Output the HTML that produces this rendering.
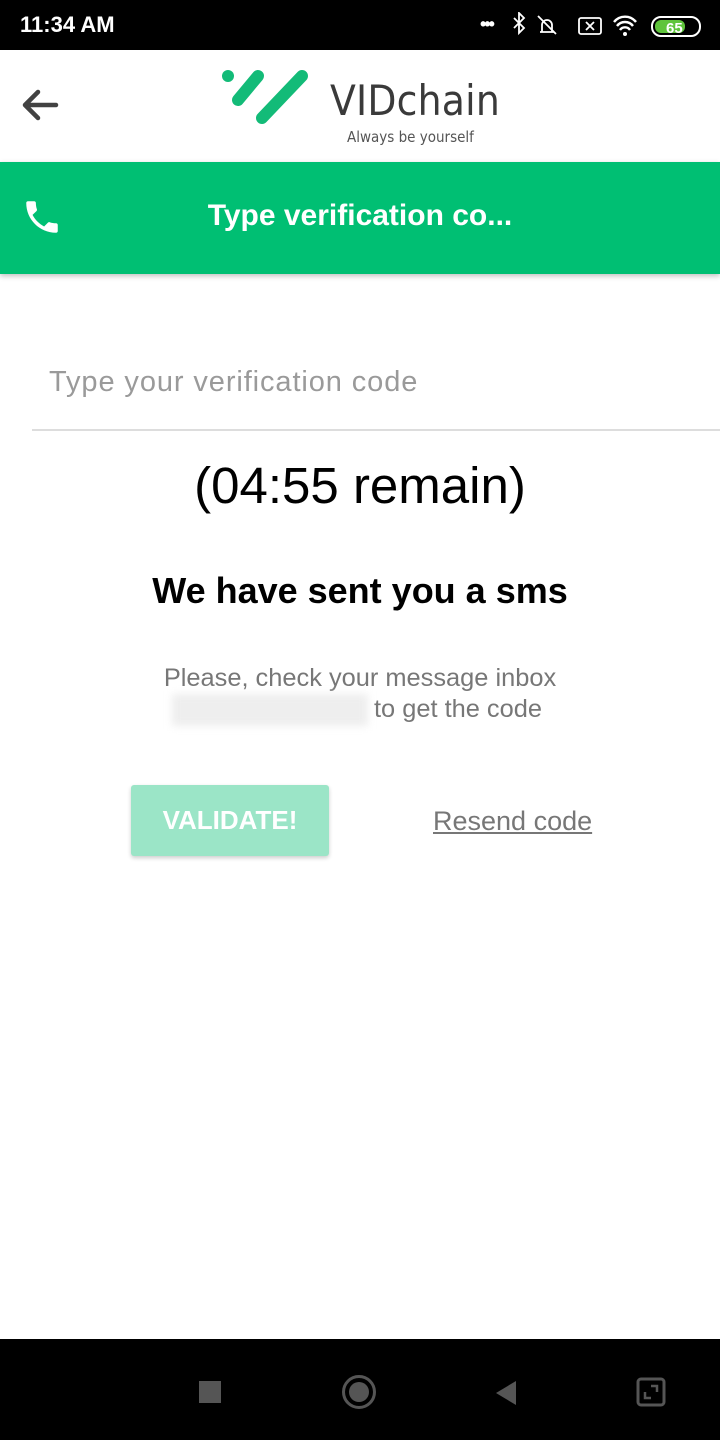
<!DOCTYPE html>
<html><head><meta charset="utf-8"><style>
*{margin:0;padding:0;box-sizing:border-box}
body{width:720px;height:1440px;position:relative;background:#fff;font-family:"Liberation Sans",Roboto,sans-serif;overflow:hidden}
.abs{position:absolute}
</style></head><body>
<div class="abs" style="left:0;top:0;width:720px;height:50px;background:#000"></div>
<div class="abs" style="left:20px;top:12px;color:#fff;font-size:22px;font-weight:bold">11:34 AM</div>
<div class="abs" style="left:480px;top:14px;color:#fff;font-size:18px;font-weight:bold;letter-spacing:-2px">•••</div>
<svg class="abs" style="left:508px;top:12px" width="200" height="28" viewBox="0 0 200 28">
<path d="M6 6l10 10-5 5V1l5 5-10 10" stroke="#fff" stroke-width="1.8" fill="none"/>
<path d="M32 20h14M34 20v-7a5 5 0 0 1 10 0v7M30 4l18 18" stroke="#fff" stroke-width="1.8" fill="none"/>
<rect x="71" y="6" width="22" height="16" rx="2" stroke="#fff" stroke-width="1.8" fill="none"/>
<path d="M78 10l8 8M86 10l-8 8" stroke="#fff" stroke-width="1.8"/>
<path d="M106 10a14 14 0 0 1 22 0M109 14a10 10 0 0 1 16 0M112 18a6 6 0 0 1 10 0" stroke="#fff" stroke-width="2.4" fill="none"/><circle cx="117" cy="22" r="2" fill="#fff"/>
<rect x="144" y="5" width="48" height="19" rx="9" stroke="#fff" stroke-width="2" fill="none"/>
<rect x="147" y="8" width="30" height="13" rx="6" fill="#5fc43b"/>
<text x="158" y="21" font-size="15" font-weight="bold" fill="#fff" font-family="Liberation Sans">65</text>
</svg>
<svg class="abs" style="left:20px;top:86px" width="40" height="40" viewBox="0 0 40 40"><path d="M36 19H6M18 6L5 19l13 13" stroke="#424242" stroke-width="4.5" fill="none" stroke-linecap="round" stroke-linejoin="round"/></svg>
<svg class="abs" style="left:218px;top:66px" width="94" height="62" viewBox="0 0 94 62">
<circle cx="10" cy="10" r="6" fill="#13bb78"/>
<path d="M20 34L40 10M44 52L84 10" stroke="#13bb78" stroke-width="12" stroke-linecap="round"/></svg>
<div class="abs" style="left:330px;top:76px;font-size:42px;color:#3a3a3a;font-family:'DejaVu Sans Condensed','Liberation Sans',sans-serif;font-weight:300;letter-spacing:0.2px">VIDchain</div>
<div class="abs" style="left:347px;top:128px;font-size:15px;color:#555;font-family:'DejaVu Sans Condensed',sans-serif">Always be yourself</div>
<div class="abs" style="left:0;top:162px;width:720px;height:112px;background:#00bf73;box-shadow:0 2px 5px rgba(0,0,0,.25)"></div>
<svg class="abs" style="left:21px;top:196px" width="42" height="42" viewBox="0 0 24 24"><path d="M6.6 10.8c1.4 2.8 3.8 5.1 6.6 6.6l2.2-2.2c.3-.3.7-.4 1-.2 1.1.4 2.3.6 3.6.6.6 0 1 .4 1 1V20c0 .6-.4 1-1 1C10.6 21 3 13.4 3 4c0-.6.4-1 1-1h3.5c.6 0 1 .4 1 1 0 1.3.2 2.5.6 3.6.1.3 0 .7-.2 1L6.6 10.8z" fill="#fff"/></svg>
<div class="abs" style="left:0;top:199px;width:720px;text-align:center;color:#fff;font-size:30px;font-weight:bold">Type verification co...</div>
<div class="abs" style="left:49px;top:366px;font-size:29px;color:#9a9a9a;letter-spacing:0.9px">Type your verification code</div>
<div class="abs" style="left:32px;top:429px;width:688px;height:2px;background:#ddd"></div>
<div class="abs" style="left:0;top:456px;width:720px;text-align:center;font-size:51px;color:#000">(04:55 remain)</div>
<div class="abs" style="left:0;top:570px;width:720px;text-align:center;font-size:36px;font-weight:bold;color:#000">We have sent you a sms</div>
<div class="abs" style="left:0;top:664px;width:720px;text-align:center;font-size:25.4px;color:#777">Please, check your message inbox</div>
<div class="abs" style="left:172px;top:694px;width:196px;height:32px;background:#eee;filter:blur(4px)"></div>
<div class="abs" style="left:374px;top:695px;font-size:25.4px;color:#777">to get the code</div>
<div class="abs" style="left:131px;top:785px;width:198px;height:71px;background:#9be5c7;border-radius:3px;box-shadow:0 2px 4px rgba(0,0,0,.2);color:#fff;font-size:26px;font-weight:bold;text-align:center;line-height:71px">VALIDATE!</div>
<div class="abs" style="left:433px;top:806px;font-size:27px;color:#777;text-decoration:underline">Resend code</div>
<div class="abs" style="left:0;top:1339px;width:720px;height:101px;background:#000"></div>
<div class="abs" style="left:199px;top:1381px;width:22px;height:22px;background:#555"></div>
<div class="abs" style="left:342px;top:1375px;width:34px;height:34px;border:3px solid #555;border-radius:50%"></div>
<div class="abs" style="left:349px;top:1382px;width:20px;height:20px;background:#555;border-radius:50%"></div>
<svg class="abs" style="left:494px;top:1380px" width="24" height="26"><path d="M22 1L2 13l20 12z" fill="#555"/></svg>
<svg class="abs" style="left:636px;top:1377px" width="30" height="30"><rect x="2" y="2" width="26" height="26" rx="3" stroke="#555" stroke-width="3" fill="none"/><path d="M9 15v6h6M21 15V9h-6" stroke="#555" stroke-width="2.5" fill="none"/></svg>
</body></html>
